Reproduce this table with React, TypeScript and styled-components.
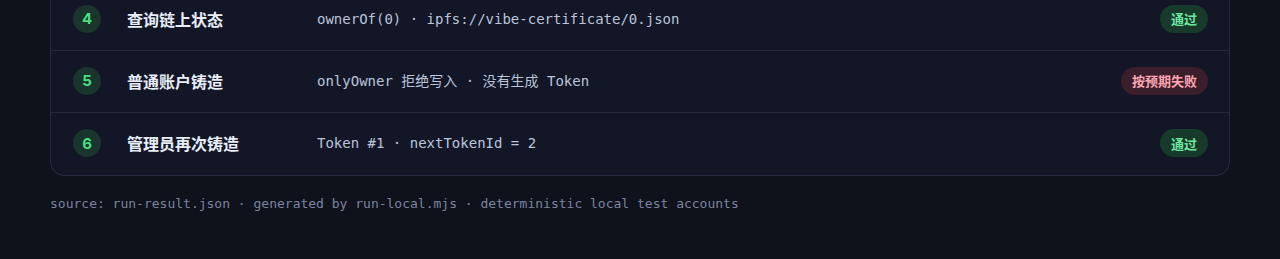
import React from "react";
import styled, { createGlobalStyle } from "styled-components";

const GlobalStyle = createGlobalStyle`
  html, body {
    margin: 0;
    padding: 0;
    background: #0f111b;
  }
  body {
    font-family: Inter, "Noto Sans CJK SC", sans-serif;
    -webkit-font-smoothing: antialiased;
  }
`;

const Page = styled.main`
  width: 1180px;
  margin: -12px auto 0;
  padding-bottom: 40px;
`;

const Card = styled.section`
  background: #121627;
  border: 1px solid #262c44;
  border-radius: 14px;
  overflow: hidden;
`;

const Row = styled.div<{ last?: boolean }>`
  display: grid;
  grid-template-columns: 28px 164px 1fr auto;
  column-gap: 26px;
  align-items: center;
  height: 62px;
  box-sizing: border-box;
  padding: 0 21px 2px 22px;
  border-bottom: ${({ last }) => (last ? "none" : "1px solid #232a40")};
`;

const StepNum = styled.div`
  width: 28px;
  height: 28px;
  border-radius: 50%;
  background: #19352c;
  color: #4ade80;
  display: flex;
  align-items: center;
  justify-content: center;
  font-family: Inter, sans-serif;
  font-weight: 700;
  font-size: 15px;
`;

const Title = styled.div`
  color: #e9edf7;
  font-family: "Noto Sans CJK SC", sans-serif;
  font-weight: 700;
  font-size: 16px;
  line-height: 22px;
`;

const Detail = styled.div`
  color: #bcc4da;
  font-family: "DejaVu Sans Mono", "Noto Sans CJK SC", monospace;
  font-size: 14px;
  line-height: 20px;
  white-space: nowrap;
`;

const Badge = styled.span<{ tone: "pass" | "fail" }>`
  display: inline-flex;
  align-items: center;
  height: 28px;
  padding: 0 11px;
  border-radius: 14px;
  font-family: "Noto Sans CJK SC", sans-serif;
  font-size: 13px;
  font-weight: 700;
  background: ${({ tone }) => (tone === "pass" ? "#183a2b" : "#3a1e29")};
  color: ${({ tone }) => (tone === "pass" ? "#6ee7a1" : "#fca5b4")};
`;

const Footer = styled.p`
  margin: 18px 0 0;
  color: #7b84a0;
  font-family: "DejaVu Sans Mono", monospace;
  font-size: 13px;
  line-height: 20px;
`;

type Step = {
  n: number;
  title: string;
  detail: string;
  tone: "pass" | "fail";
  label: string;
};

const steps: Step[] = [
  { n: 4, title: "查询链上状态", detail: "ownerOf(0) · ipfs://vibe-certificate/0.json", tone: "pass", label: "通过" },
  { n: 5, title: "普通账户铸造", detail: "onlyOwner 拒绝写入 · 没有生成 Token", tone: "fail", label: "按预期失败" },
  { n: 6, title: "管理员再次铸造", detail: "Token #1 · nextTokenId = 2", tone: "pass", label: "通过" },
];

export default function App() {
  return (
    <>
      <GlobalStyle />
      <Page>
        <Card>
          {steps.map((s, i) => (
            <Row key={s.n} last={i === steps.length - 1}>
              <StepNum>{s.n}</StepNum>
              <Title>{s.title}</Title>
              <Detail>{s.detail}</Detail>
              <Badge tone={s.tone}>{s.label}</Badge>
            </Row>
          ))}
        </Card>
        <Footer>source: run-result.json · generated by run-local.mjs · deterministic local test accounts</Footer>
      </Page>
    </>
  );
}
